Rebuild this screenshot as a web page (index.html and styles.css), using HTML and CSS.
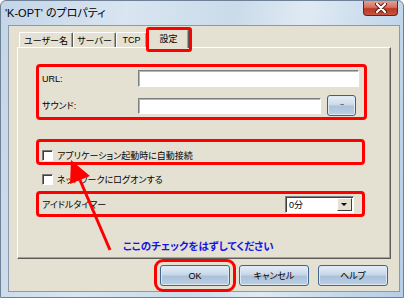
FILE: index.html
```html
<!DOCTYPE html>
<html>
<head>
  <title>'K-OPT' のプロパティ</title>
  <link rel="stylesheet" href="styles.css">
</head>
<body>
  <div class="window">
    <div class="titlebar">
      <span class="title">'K-OPT' のプロパティ</span>
      <span class="close">
        <svg width="14" height="10" viewBox="0 0 14 10">
          <path d="M3 1 L11 9 M11 1 L3 9" stroke="#5a1a12" stroke-width="4" stroke-linecap="round"/>
          <path d="M3 1 L11 9 M11 1 L3 9" stroke="#ffffff" stroke-width="2.2" stroke-linecap="round"/>
        </svg>
      </span>
    </div>

    <div class="client">
      <div class="tabs">
        <div class="tab tab-user">ユーザー名</div>
        <div class="tab tab-server">サーバー</div>
        <div class="tab tab-tcp">TCP</div>
        <div class="tab tab-active">設定</div>
      </div>

      <div class="panel">
        <div class="group group-url">
          <div class="field">
            <span class="field-label">URL:</span>
            <input type="text" class="text-box">
          </div>
          <div class="field">
            <span class="field-label">サウンド:</span>
            <input type="text" class="text-box text-short">
            <button class="browse">...</button>
          </div>
        </div>

        <div class="group group-auto">
          <label class="check"><span class="check-box"></span>アプリケーション起動時に自動接続</label>
        </div>

        <label class="check check-plain"><span class="check-box"></span>ネットワークにログオンする</label>

        <div class="group group-idle">
          <span>アイドルタイマー</span>
          <div class="select">
            <span class="select-value">0分</span>
            <span class="select-drop"></span>
          </div>
        </div>

        <p class="note">ここのチェックをはずしてください</p>
      </div>

      <div class="buttons">
        <button class="btn btn-ok">OK</button>
        <button class="btn">キャンセル</button>
        <button class="btn">ヘルプ</button>
      </div>
    </div>

    <!-- annotation arrow -->
    <svg class="arrow" width="404" height="298" viewBox="0 0 404 298">
      <line x1="110" y1="250" x2="80" y2="180" stroke="#ff0000" stroke-width="3"/>
      <polygon points="71,160 90,176 70,184" fill="#ff0000"/>
    </svg>
  </div>
</body>
</html>
```

FILE: styles.css
```css
body {
  margin: 0;
  background-color: #ffffff;
  font-family: "Liberation Sans", "Noto Sans CJK JP", sans-serif;
  font-size: 9px;
  color: #000000;
}

.window {
  position: relative;
  width: 404px;
  height: 298px;
  box-sizing: border-box;
  display: flex;
  flex-direction: column;
  border: 1px solid #6e8196;
  border-radius: 6px 6px 0 0;
  background: linear-gradient(100deg, #c4d5e7 0%, #d9e5f1 28%, #cbdbea 52%, #e0eaf4 68%, #c6d9ec 85%, #b6cee7 100%);
}

.titlebar {
  height: 24px;
  display: flex;
  align-items: center;
  padding-left: 4px;
}

.title {
  font-size: 11px;
  font-feature-settings: "palt";
  margin-top: -2px;
}

.close {
  align-self: flex-start;
  margin-left: auto;
  margin-right: 5px;
  width: 35px;
  height: 15px;
  box-sizing: border-box;
  display: flex;
  align-items: center;
  justify-content: center;
  border: 1px solid #6a2218;
  border-top: none;
  border-radius: 0 0 4px 4px;
  background: linear-gradient(#e3a193 0%, #d6705f 45%, #b93a26 55%, #c9553f 100%);
}

.client {
  flex: 1;
  margin: 0 3px 5px 7px;
  border: 1px solid #8b99a9;
  background-color: #e5e1d2;
  padding: 3px 8px 5px 8px;
}

.tabs {
  display: flex;
  align-items: flex-end;
  height: 18px;
  margin-left: 2px;
}

.tab {
  height: 15px;
  box-sizing: border-box;
  display: flex;
  align-items: center;
  justify-content: center;
  border-top: 1px solid #ffffff;
  border-left: 1px solid #ffffff;
  border-right: 1px solid #5a5a5a;
  border-radius: 2px 2px 0 0;
  box-shadow: inset -1px 0 0 #a6a396;
  font-feature-settings: "palt";
}

.tab-user { width: 54px; }
.tab-server { width: 43px; }
.tab-tcp { width: 31px; }

.tab-active {
  position: relative;
  z-index: 1;
  width: 41px;
  height: 19px;
  margin-left: 1px;
  margin-bottom: -1px;
  background-color: #e5e1d2;
  padding-bottom: 2px;
}

.tab-active::after {
  content: "";
  position: absolute;
  top: -3px;
  left: -3px;
  right: -4px;
  bottom: -4px;
  border: 3px solid #ff0000;
  border-radius: 3px;
}

.panel {
  height: 212px;
  box-sizing: border-box;
  border: 1px solid;
  border-color: #ffffff #5a5a5a #5a5a5a #ffffff;
  box-shadow: inset -1px -1px 0 #a6a396;
  overflow: hidden;
}

.group {
  box-sizing: border-box;
  margin-left: 18px;
  border: 3px solid #ff0000;
  border-radius: 4px;
}

.group-url {
  width: 331px;
  height: 56px;
  margin-top: 16px;
  padding: 3px 5px 1px 3px;
}

.field {
  display: flex;
  align-items: center;
  height: 17px;
}

.field + .field {
  height: 21px;
  margin-top: 8px;
  padding-right: 3px;
}

.field-label {
  width: 96px;
  flex-shrink: 0;
  font-feature-settings: "palt";
}

.text-box {
  flex: 1;
  height: 17px;
  box-sizing: border-box;
  margin: 0;
  padding: 0 2px;
  border: 1px solid;
  border-color: #7f7f7f #ffffff #ffffff #7f7f7f;
  box-shadow: inset 1px 1px 0 #b9b5a7;
  background-color: #ffffff;
  outline: none;
}

.text-short {
  flex: none;
  width: 183px;
  height: 16px;
}

.browse {
  width: 29px;
  height: 21px;
  margin: 0 0 0 6px;
  padding: 0 0 5px 0;
  border: 1px solid #3e6287;
  border-radius: 3px;
  background: linear-gradient(#e9f0f7 0%, #c9d9ea 48%, #aac2dc 52%, #bcd0e4 100%);
  box-shadow: inset 0 0 0 1px #dfe9f3;
  font-family: "Liberation Sans", sans-serif;
  font-size: 8px;
  line-height: 1;
  letter-spacing: -1px;
}

.group-auto {
  width: 329px;
  height: 26px;
  margin-top: 19px;
  padding: 7px 3px 0 3px;
}

.check {
  display: flex;
  align-items: center;
  height: 13px;
  font-feature-settings: "palt";
}

.check-box {
  width: 11px;
  height: 11px;
  box-sizing: border-box;
  margin-right: 4px;
  border: 1px solid;
  border-color: #7a7a7a #ffffff #ffffff #7a7a7a;
  box-shadow: inset 1px 1px 0 #3f3f3f;
  background-color: #ffffff;
}

.check-plain {
  margin: 8px 0 0 24px;
}

.group-idle {
  width: 329px;
  height: 26px;
  margin-top: 5px;
  padding: 0 8px 0 3px;
  display: flex;
  align-items: center;
  font-feature-settings: "palt";
}

.select {
  margin-left: auto;
  width: 69px;
  height: 17px;
  box-sizing: border-box;
  display: flex;
  align-items: center;
  border: 1px solid;
  border-color: #7f7f7f #ffffff #ffffff #7f7f7f;
  box-shadow: inset 1px 1px 0 #3f3f3f;
  background-color: #ffffff;
  padding: 1px 1px 1px 3px;
}

.select-value {
  flex: 1;
}

.select-drop {
  position: relative;
  width: 15px;
  height: 13px;
  box-sizing: border-box;
  border: 1px solid;
  border-color: #ffffff #404040 #404040 #ffffff;
  background-color: #e5e1d2;
}

.select-drop::after {
  content: "";
  position: absolute;
  left: 3px;
  top: 4px;
  border-left: 3px solid transparent;
  border-right: 3px solid transparent;
  border-top: 3px solid #000000;
}

.note {
  margin: 22px 0 0 105px;
  line-height: 14px;
  font-size: 10.5px;
  font-weight: bold;
  color: #1414e6;
  font-feature-settings: "palt";
}

.buttons {
  display: flex;
  justify-content: flex-end;
  gap: 9px;
  margin-top: 6px;
  padding-right: 3px;
}

.btn {
  width: 70px;
  height: 21px;
  margin: 0;
  padding: 0;
  border: 1px solid #41678f;
  border-radius: 3px;
  background: linear-gradient(#e6eef7 0%, #c6d7e9 46%, #a9c1db 54%, #bccfe3 100%);
  box-shadow: inset 0 0 0 1px #dde8f3;
  font-family: "Liberation Sans", "Noto Sans CJK JP", sans-serif;
  font-size: 9px;
  font-feature-settings: "palt";
  color: #000000;
}

.btn-ok {
  outline: 3px solid #ff0000;
  outline-offset: 3px;
}

.arrow {
  position: absolute;
  top: -1px;
  left: -1px;
  pointer-events: none;
  z-index: 5;
}
```
